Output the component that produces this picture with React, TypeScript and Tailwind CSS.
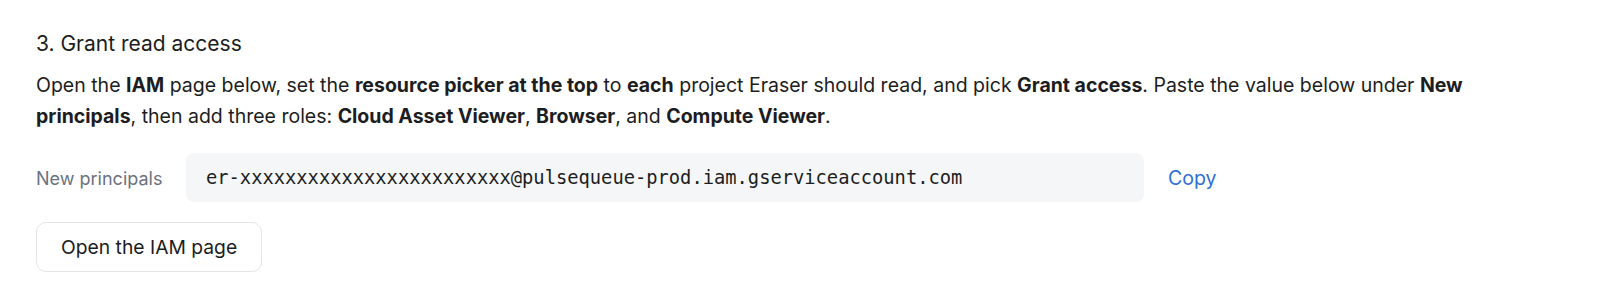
export default function App() {
  return (
    <div className="min-h-[292px] bg-white px-9 pt-[30px] font-['Inter',sans-serif] text-[#1c1d21]">
      <h2 className="text-[21px] leading-[28px] font-normal">3. Grant read access</h2>

      <p className="mt-[12px] text-[19.5px] leading-[31px]">
        Open the <b className="font-bold">IAM</b> page below, set the{" "}
        <b className="font-bold">resource picker at the top</b> to <b className="font-bold">each</b> project
        Eraser should read, and pick <b className="font-bold">Grant access</b>. Paste the value below under{" "}
        <b className="font-bold">New principals</b>, then add three roles:{" "}
        <b className="font-bold">Cloud Asset Viewer</b>, <b className="font-bold">Browser</b>, and{" "}
        <b className="font-bold">Compute Viewer</b>.
      </p>

      <div className="mt-[21px] flex items-center">
        <span className="w-[150px] shrink-0 pt-[2px] text-[18px] text-[#6b7280]">New principals</span>
        <div className="flex h-[49px] w-[958px] items-center rounded-lg bg-[#f5f6f8] px-5 pt-[2px]">
          <code className="font-['DejaVu_Sans_Mono',monospace] text-[18.75px] text-[#1c1d21]">
            er-xxxxxxxxxxxxxxxxxxxxxxxx@pulsequeue-prod.iam.gserviceaccount.com
          </code>
        </div>
        <button className="ml-6 pt-[2px] text-[19.5px] text-[#2f6fd8]">Copy</button>
      </div>

      <button className="mt-[20px] h-[50px] rounded-[10px] border border-[#e3e5e8] bg-white px-6 text-[19.3px] text-[#1c1d21]">
        Open the IAM page
      </button>
    </div>
  )
}
